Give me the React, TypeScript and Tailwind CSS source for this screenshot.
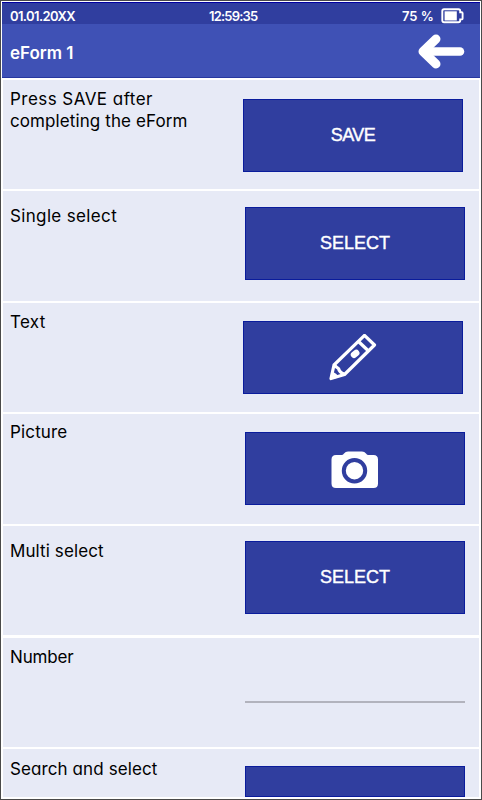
import type { ReactNode } from "react"

interface FormRowProps {
  label: ReactNode;
  className: string;
  labelClass: string;
  children: ReactNode;
}

function FormRow({ label, className, labelClass, children }: FormRowProps) {
  return (
    <div className={`flex shrink-0 items-start overflow-hidden bg-[#e7eaf6] ${className}`}>
      <div className={`w-[240px] shrink-0 whitespace-nowrap pl-[7px] text-[17px] leading-[22px] text-black ${labelClass}`}>
        {label}
      </div>
      {children}
    </div>
  )
}

function FormButton({ className, children }: { className: string; children?: ReactNode }) {
  return (
    <button
      className={`flex w-[220px] shrink-0 items-center justify-center border border-[#0a1c9c] bg-[#303e9f] font-['Liberation_Sans',sans-serif] text-[18px] text-white [-webkit-text-stroke:0.4px_#fff] ${className}`}
    >
      {children}
    </button>
  )
}

function BatteryIcon() {
  return (
    <svg className="h-[16px] w-[23px]" viewBox="0 0 23 16" fill="none">
      <path d="M3 1.3h14.5q1.7 0 1.7 1.7v1.2h1.4q1 0 1 1v5.2q0 1-1 1h-1.4v1.2q0 1.7-1.7 1.7H3q-1.7 0-1.7-1.7V3q0-1.7 1.7-1.7z" stroke="#fff" strokeWidth="1.9" />
      <path d="M3.6 3.3h12.2v9.2H3.6z" fill="#fff" />
    </svg>
  )
}

function BackIcon() {
  return (
    <svg className="h-[36px] w-[48px]" viewBox="0 0 48 36" fill="none">
      <path d="M19 6L6 18.5l13 12.500" stroke="#fff" strokeWidth="9" strokeLinecap="round" strokeLinejoin="round" />
      <path d="M8 18.500h35" stroke="#fff" strokeWidth="8.500" strokeLinecap="round" />
    </svg>
  )
}

function PencilIcon() {
  return (
    <svg className="h-[48px] w-[48px]" viewBox="0 0 48 48" fill="none" stroke="#fff" strokeWidth="3.2" strokeLinejoin="round">
      <path d="M35.500 1.300L45.500 11 15.500 40.500 2 44.500 5 31z" />
      <path d="M29.500 7.500L39.500 17M5.500 31q1.500 2 4 3.500 1 4 5.500 5.500" />
      <path d="M2 44.500l1.500-6q3.500 1.500 5 4.500z" fill="#fff" strokeWidth="1.500" />
      <path d="M25 20.800l2.200-1.800" strokeWidth="6.500" strokeLinecap="round" />
    </svg>
  )
}

function CameraIcon() {
  return (
    <svg className="h-[38px] w-[48px]" viewBox="0 0 48 38">
      <path d="M5 5h5.500q1.500 0 2.500-1.500Q14.500 1.500 17 1.500h14q2.500 0 4 2Q36 5 37.500 5H42.500q4.500 0 4.500 4.500V33.500q0 4.500-4.500 4.500H5Q.5 38 .5 33.500V9.500Q.5 5 5 5z" fill="#fff" />
      <circle cx="23.500" cy="20.700" r="10.700" fill="#fff" stroke="#303e9f" strokeWidth="4" />
    </svg>
  )
}

export default function App() {
  return (
    <div className="h-[800px] w-[482px] border border-[#4a4a4a] bg-white font-['Inter',sans-serif] [font-feature-settings:'cv11']">
      <div className="flex h-[798px] flex-col overflow-hidden border border-white border-b-2">
        {/* Status bar */}
        <div className="flex h-[22px] w-[478px] shrink-0 items-center border-t border-[#0000a0] bg-[#303e9f] pt-[5px] text-[13px] font-semibold leading-[16px] text-white">
          <span className="ml-[8px] w-[199px] tracking-[-0.6px]">01.01.20XX</span>
          <span className="w-[193px] tracking-[-0.8px]">12:59:35</span>
          <span className="w-[39px] whitespace-nowrap">75 %</span>
          <BatteryIcon />
        </div>

        {/* Title bar */}
        <div className="flex h-[54px] w-[478px] shrink-0 items-center justify-between border-b border-[#27379f] bg-[#3f51b5] pl-[8px] pr-[15px]">
          <h1 className="mt-[7px] text-[17px] font-semibold text-white">eForm 1</h1>
          <BackIcon />
        </div>

        {/* Form fields */}
        <div className="mt-[2px] ml-px flex w-[476px] flex-col">
          <FormRow
            label={<><span className="tracking-[0.45px]">Press SAVE after</span><br /><span className="tracking-[0.1px]">completing the eForm</span></>}
            className="h-[109px]"
            labelClass="pt-[8px]"
          >
            <FormButton className="mt-[19px] h-[73px] tracking-[-0.5px]">SAVE</FormButton>
          </FormRow>
          <FormRow label="Single select" className="mt-[2px] h-[110px]" labelClass="pt-[14px] tracking-[0.35px]">
            <FormButton className="ml-[2px] mt-[16px] h-[73px]">SELECT</FormButton>
          </FormRow>
          <FormRow label="Text" className="mt-[2px] h-[109px]" labelClass="pt-[8px] tracking-[0.3px]">
            <FormButton className="mt-[18px] h-[73px]"><PencilIcon /></FormButton>
          </FormRow>
          <FormRow label="Picture" className="mt-[2px] h-[110px]" labelClass="pt-[7px] tracking-[0.15px]">
            <FormButton className="ml-[2px] mt-[18px] h-[73px]"><CameraIcon /></FormButton>
          </FormRow>
          <FormRow label="Multi select" className="mt-[2px] h-[109px]" labelClass="pt-[14px] tracking-[0.1px]">
            <FormButton className="ml-[2px] mt-[15px] h-[73px]">SELECT</FormButton>
          </FormRow>
          <FormRow label="Number" className="mt-[3px] h-[109px]" labelClass="pt-[8px] tracking-[-0.15px]">
            <div className="ml-[2px] mt-[63px] h-[2px] w-[220px] bg-[#b2b3bd]" />
          </FormRow>
          <FormRow label="Search and select" className="mt-[2px] h-[48px]" labelClass="pt-[9px] tracking-[0.1px]">
            <FormButton className="ml-[2px] mt-[17px] h-[31px]" />
          </FormRow>
        </div>
      </div>
    </div>
  )
}
